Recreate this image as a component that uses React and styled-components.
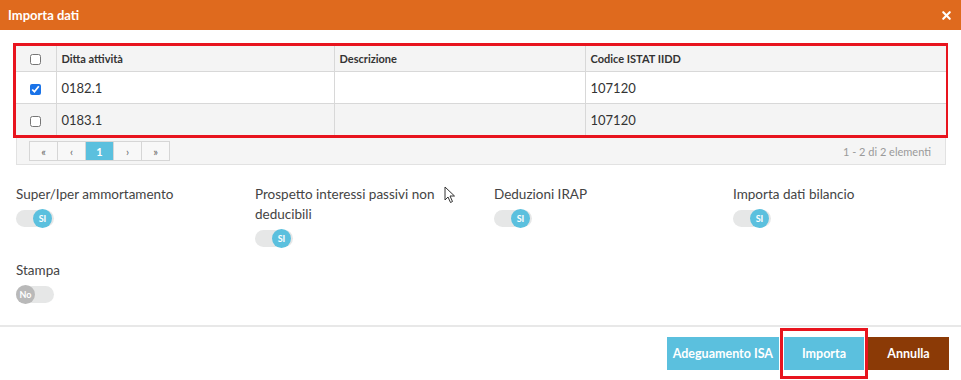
import React from "react";
import styled, { createGlobalStyle } from "styled-components";
import { X } from "lucide-react";

const GlobalStyle = createGlobalStyle`
  html, body {
    margin: 0;
    padding: 0;
    background: #fff;
  }
  body {
    font-family: Lato, "Open Sans", sans-serif;
    color: #444;
  }
`;

const Modal = styled.div`
  position: relative;
  width: 961px;
  height: 380px;
  display: flex;
  flex-direction: column;
  background: #fff;
  overflow: hidden;
`;

const Header = styled.div`
  height: 30px;
  flex: 0 0 30px;
  background: #df6a1e;
  display: flex;
  align-items: center;
  justify-content: space-between;
  padding: 0 8px;
  color: #fff;
`;

const Title = styled.h1`
  margin: 0;
  font-size: 13px;
  font-weight: 700;
`;

const CloseButton = styled.button`
  border: none;
  background: none;
  color: #fff;
  padding: 0;
  display: flex;
  align-items: center;
`;

const Body = styled.div`
  padding: 13px 13px 0 13px;
  flex: 1;
`;

const Highlight = styled.div`
  border: 3px solid #e8141e;
  border-right-width: 2px;
`;

const Table = styled.table`
  width: 100%;
  border-collapse: collapse;
  table-layout: fixed;
  font-size: 13px;
  color: #333;
`;

const HeadCell = styled.th`
  height: 25px;
  padding: 0 5px;
  text-align: ${(p) => (p.$center ? "center" : "left")};
  font-weight: 700;
  font-size: 11px;
  background: #f4f4f4;
  border: 1px solid #d8d8d8;
  border-top: none;
  &:first-child { border-left: none; }
  &:last-child { border-right: none; }
`;

const Row = styled.tr`
  background: ${(p) => (p.$alt ? "#f4f4f4" : "#fff")};
`;

const Cell = styled.td`
  height: 31px;
  padding: 0 5px;
  text-align: ${(p) => (p.$center ? "center" : "left")};
  border: 1px solid #d8d8d8;
  &:first-child { border-left: none; }
  &:last-child { border-right: none; }
  tr:last-child & { border-bottom: none; }
`;

const Check = styled.input.attrs({ type: "checkbox" })`
  width: 11px;
  height: 11px;
  margin: 0;
  vertical-align: middle;
  accent-color: #1a73e8;
`;

const Pager = styled.div`
  margin: 0 2px 0 3px;
  height: 27px;
  background: #f5f5f5;
  border: 1px solid #e2e2e2;
  border-top: none;
  box-sizing: border-box;
  display: flex;
  align-items: center;
  justify-content: space-between;
  padding: 0 14px 0 12px;
`;

const PageGroup = styled.div`
  display: flex;
`;

const PageButton = styled.button`
  width: 29px;
  height: 20px;
  margin-left: -1px;
  border: 1px solid #d6d6d6;
  background: ${(p) => (p.$active ? "#5bc0de" : "#f8f8f8")};
  color: ${(p) => (p.$active ? "#fff" : "#666")};
  font-family: inherit;
  font-size: 11px;
  font-weight: ${(p) => (p.$active ? 700 : 400)};
  padding: 0;
  &:first-child { margin-left: 0; }
`;

const PageInfo = styled.span`
  font-size: 11px;
  color: #9a9a9a;
`;

const Options = styled.div`
  display: grid;
  grid-template-columns: repeat(4, 239px);
  row-gap: 13px;
  padding: 19px 3px 0;
`;

const Option = styled.div`
  display: flex;
  flex-direction: column;
  align-items: flex-start;
  padding-right: 14px;
`;

const Label = styled.span`
  font-size: 13.5px;
  line-height: 20px;
  color: #444;
  margin-bottom: 6px;
`;

const Track = styled.div`
  width: 38px;
  height: 17px;
  border-radius: 9px;
  background: #e6e7e7;
  display: flex;
  align-items: center;
  justify-content: ${(p) => (p.$on ? "flex-end" : "flex-start")};
  padding-right: ${(p) => (p.$on ? "2px" : "0")};
  box-sizing: border-box;
`;

const Knob = styled.span`
  width: 19px;
  height: 19px;
  border-radius: 50%;
  background: ${(p) => (p.$on ? "#5bc0de" : "#b9b9b9")};
  color: #fff;
  font-size: 9px;
  font-weight: 700;
  display: flex;
  align-items: center;
  justify-content: center;
`;

const Footer = styled.div`
  border-top: 2px solid #e8e8e8;
  height: 55px;
  flex: 0 0 55px;
  display: flex;
  align-items: center;
  justify-content: flex-end;
  padding: 0 12px 0 0;
  box-sizing: border-box;
`;

const Action = styled.button`
  height: 33px;
  padding: 0 ${(p) => p.$pad || 8}px;
  min-width: ${(p) => p.$min || 0}px;
  border: none;
  background: ${(p) => p.$bg};
  color: #fff;
  font-family: inherit;
  font-size: 12.5px;
  font-weight: 700;
`;

const Marked = styled.div`
  border: 3px solid #e8141e;
  padding: 6px 1px;
  margin: 0 0 0 1px;
  display: flex;
`;

const Cursor = styled.svg`
  position: absolute;
  left: 444px;
  top: 186px;
`;

const toggles = [
  { label: "Super/Iper ammortamento", on: true },
  { label: "Prospetto interessi passivi non deducibili", on: true },
  { label: "Deduzioni IRAP", on: true },
  { label: "Importa dati bilancio", on: true },
  { label: "Stampa", on: false },
];

const rows = [
  { ditta: "0182.1", desc: "", code: "107120", checked: true },
  { ditta: "0183.1", desc: "", code: "107120", checked: false },
];

const Toggle = ({ on }) => (
  <Track $on={on}>
    <Knob $on={on}>{on ? "SI" : "No"}</Knob>
  </Track>
);

export default function App() {
  return (
    <Modal>
      <GlobalStyle />
      <Header>
        <Title>Importa dati</Title>
        <CloseButton>
          <X size={13} strokeWidth={4} />
        </CloseButton>
      </Header>
      <Body>
        <Highlight>
          <Table>
            <colgroup>
              <col style={{ width: 40 }} />
              <col style={{ width: 278 }} />
              <col style={{ width: 251 }} />
              <col />
            </colgroup>
            <thead>
              <tr>
                <HeadCell $center>
                  <Check readOnly />
                </HeadCell>
                <HeadCell>Ditta attività</HeadCell>
                <HeadCell>Descrizione</HeadCell>
                <HeadCell>Codice ISTAT IIDD</HeadCell>
              </tr>
            </thead>
            <tbody>
              {rows.map((r, i) => (
                <Row key={r.ditta} $alt={i % 2 === 1}>
                  <Cell $center>
                    <Check readOnly checked={r.checked} />
                  </Cell>
                  <Cell>{r.ditta}</Cell>
                  <Cell>{r.desc}</Cell>
                  <Cell>{r.code}</Cell>
                </Row>
              ))}
            </tbody>
          </Table>
        </Highlight>
        <Pager>
          <PageGroup>
            <PageButton>«</PageButton>
            <PageButton>‹</PageButton>
            <PageButton $active>1</PageButton>
            <PageButton>›</PageButton>
            <PageButton>»</PageButton>
          </PageGroup>
          <PageInfo>1 - 2 di 2 elementi</PageInfo>
        </Pager>
        <Options>
          {toggles.map((t) => (
            <Option key={t.label}>
              <Label>{t.label}</Label>
              <Toggle on={t.on} />
            </Option>
          ))}
        </Options>
      </Body>
      <Footer>
        <Action $bg="#5bc0de" $pad={6}>Adeguamento ISA</Action>
        <Marked>
          <Action $bg="#5bc0de" $min={80}>Importa</Action>
        </Marked>
        <Action $bg="#8b3a06" $min={81}>Annulla</Action>
      </Footer>
      <Cursor width="12" height="18" viewBox="0 0 12 18">
        <path d="M1 1 L1 14 L4 11 L6.5 16.5 L8.5 15.5 L6 10 L10.5 10 Z" fill="#fff" stroke="#333" strokeWidth="1" strokeLinejoin="round" />
      </Cursor>
    </Modal>
  );
}
